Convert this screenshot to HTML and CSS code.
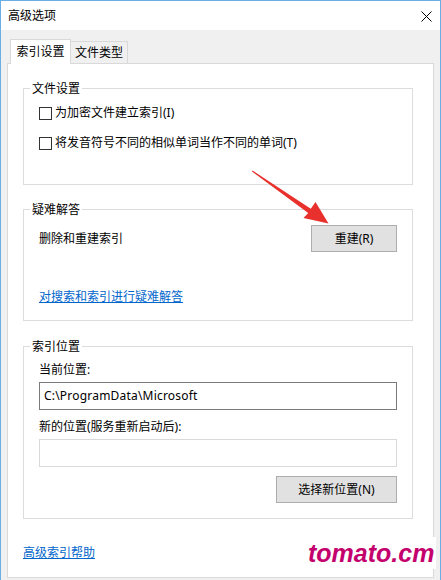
FILE: index.html
```html
<!DOCTYPE html>
<html lang="zh-CN">
<head>
<meta charset="utf-8">
<title>高级选项</title>
<link rel="stylesheet" href="styles.css">
</head>
<body>
<div class="window">
  <div class="titlebar">
    <span class="title">高级选项</span>
    <svg class="close" width="11" height="11" viewBox="0 0 11 11"><path d="M0.5 0.5 L10.5 10.5 M10.5 0.5 L0.5 10.5" stroke="#000" stroke-width="1" fill="none"/></svg>
  </div>
  <div class="client">
    <div class="tabs">
      <div class="tab active">索引设置</div>
      <div class="tab">文件类型</div>
    </div>
    <div class="panel">
      <fieldset class="group g1">
        <legend>文件设置</legend>
        <label class="check"><span class="box"></span>为加密文件建立索引(I)</label>
        <label class="check second"><span class="box"></span>将发音符号不同的相似单词当作不同的单词(T)</label>
      </fieldset>
      <fieldset class="group g2">
        <legend>疑难解答</legend>
        <div class="row">
          <span>删除和重建索引</span>
          <button class="btn btn-rebuild">重建(R)</button>
        </div>
        <a class="link trouble" href="#">对搜索和索引进行疑难解答</a>
      </fieldset>
      <fieldset class="group g3">
        <legend>索引位置</legend>
        <div class="lbl first">当前位置:</div>
        <div class="input">C:\ProgramData\Microsoft</div>
        <div class="lbl">新的位置(服务重新启动后):</div>
        <div class="input disabled"></div>
        <div class="btnrow"><button class="btn btn-choose">选择新位置(N)</button></div>
      </fieldset>
      <a class="link help" href="#">高级索引帮助</a>
    </div>
  </div>
  <svg class="arrow" width="441" height="580" viewBox="0 0 441 580">
    <polygon points="252.5,170.5 310.8,208.8 315.5,202 328.5,223.5 303.5,218 308.2,213 252,171.5" fill="#e8302c"/>
  </svg>
  <div class="watermark">tomato.cm</div>
</div>
</body>
</html>
```

FILE: styles.css
```css
* { box-sizing: border-box; }
html, body { margin: 0; padding: 0; background: #fff; }
body {
  font-family: "Noto Sans", "Noto Sans CJK SC", sans-serif;
  font-size: 12px;
  color: #000;
}
.window {
  position: relative;
  width: 441px;
  height: 580px;
  border: 1px solid #6aaee6;
  border-bottom: none;
  display: flex;
  flex-direction: column;
  overflow: hidden;
}
.titlebar {
  height: 29px;
  background: #fff;
  display: flex;
  align-items: center;
  padding: 0 8px 0 7px;
  flex: none;
}
.title { line-height: 16px; }
.close { margin-left: auto; margin-top: 1px; }
.client {
  flex: 1;
  background: #f0f0f0;
  padding: 9px 6px 2px 6px;
  display: flex;
  flex-direction: column;
}
.tabs {
  height: 24px;
  display: flex;
  align-items: flex-end;
  padding-left: 3px;
  position: relative;
  z-index: 1;
  flex: none;
}
.tab {
  height: 22px;
  width: 58px;
  margin-left: -1px;
  border: 1px solid #d9d9d9;
  border-bottom: none;
  background: #f0f0f0;
  display: flex;
  align-items: center;
  justify-content: center;
  line-height: 16px;
  padding-top: 1px;
}
.tab.active {
  height: 25px;
  width: 61px;
  margin-left: 0;
  margin-bottom: -1px;
  background: #fff;
  position: relative;
  z-index: 2;
  padding-top: 0;
}
.panel {
  flex: 1;
  background: #fff;
  border: 1px solid #d9d9d9;
  padding: 0 20px 0 15px;
  display: flex;
  flex-direction: column;
  align-items: flex-start;
}
.group {
  width: 390px;
  margin: 16px 0 0 0;
  padding: 0 15px;
  border: 1px solid #dcdcdc;
  min-width: 0;
}
.group legend {
  line-height: 17px;
  padding: 0 2px;
  margin-left: -9px;
}
.g1 { padding-top: 8px; padding-bottom: 33px; }
.g2 { padding-top: 7px; padding-bottom: 15px; }
.g3 { margin-top: 17px; padding-top: 0; padding-bottom: 15px; }
.check {
  display: flex;
  align-items: center;
  line-height: 16px;
}
.check.second { margin-top: 14px; }
.box {
  width: 13px;
  height: 13px;
  border: 1px solid #333;
  background: #fff;
  margin-right: 3px;
  flex: none;
}
.row {
  display: flex;
  align-items: center;
  justify-content: space-between;
  line-height: 16px;
}
.btn {
  font: inherit;
  color: #000;
  background: #e1e1e1;
  border: 1px solid #adadad;
  height: 27px;
  padding: 0;
  line-height: 16px;
}
.btn-rebuild { width: 86px; }
.btn-choose { width: 121px; }
.link {
  color: #0066cc;
  text-decoration: underline;
  line-height: 16px;
  display: block;
}
.trouble { margin-top: 37px; }
.lbl { line-height: 16px; margin-top: 9px; }
.lbl.first { margin-top: 7px; }
.input {
  height: 28px;
  margin-top: 4px;
  border: 1px solid #7a7a7a;
  background: #fff;
  padding: 0 4px;
  line-height: 26px;
  letter-spacing: 0.2px;
}
.input.disabled { border-color: #d9d9d9; }
.btnrow {
  display: flex;
  justify-content: flex-end;
  margin-top: 9px;
}
.help { margin-top: 26px; }
.arrow {
  position: absolute;
  left: -1px;
  top: -1px;
  pointer-events: none;
  z-index: 5;
}
.watermark {
  position: absolute;
  left: 305px;
  top: 536px;
  padding: 0 2px;
  background: #fff;
  color: #c4026e;
  font-family: "Liberation Sans", sans-serif;
  font-weight: bold;
  font-style: italic;
  font-size: 25px;
  line-height: 32px;
  z-index: 5;
}
```
